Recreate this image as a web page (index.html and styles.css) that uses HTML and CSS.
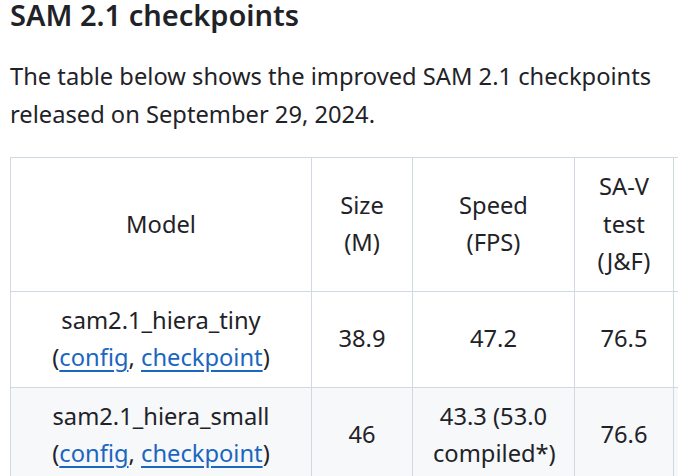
FILE: index.html
```html
<!DOCTYPE html>
<html>
<head>
<meta charset="utf-8">
<link rel="stylesheet" href="styles.css">
</head>
<body>
<article class="markdown">
  <h3 class="title">SAM 2.1 checkpoints</h3>
  <p class="intro">The table below shows the improved SAM 2.1 checkpoints released on September 29, 2024.</p>
  <div class="table-wrap">
    <table class="ckpt">
      <colgroup>
        <col class="c-model">
        <col class="c-size">
        <col class="c-speed">
        <col class="c-sav">
        <col class="c-mose">
        <col class="c-lvos">
      </colgroup>
      <thead>
        <tr>
          <th>Model</th>
          <th>Size (M)</th>
          <th>Speed (FPS)</th>
          <th>SA-V test (J&amp;F)</th>
          <th>MOSE val (J&amp;F)</th>
          <th>LVOS v2 (J&amp;F)</th>
        </tr>
      </thead>
      <tbody>
        <tr>
          <td>sam2.1_hiera_tiny<br>(<a href="#">config</a>, <a href="#">checkpoint</a>)</td>
          <td>38.9</td>
          <td>47.2</td>
          <td>76.5</td>
          <td>71.8</td>
          <td>77.3</td>
        </tr>
        <tr class="alt">
          <td>sam2.1_hiera_small<br>(<a href="#">config</a>, <a href="#">checkpoint</a>)</td>
          <td>46</td>
          <td>43.3 (53.0 compiled*)</td>
          <td>76.6</td>
          <td>73.5</td>
          <td>78.3</td>
        </tr>
      </tbody>
    </table>
  </div>
</article>
</body>
</html>
```

FILE: styles.css
```css
html, body {
  margin: 0;
  padding: 0;
  background: #ffffff;
}

body {
  width: 691px;
  height: 476px;
  overflow: hidden;
}

.markdown {
  padding: 0 0 0 10px;
  color: #1f2328;
  font-family: "Noto Sans", "Open Sans", sans-serif;
  font-size: 23.7px;
  line-height: 37.5px;
}

.title {
  margin: 0;
  font-size: 29px;
  font-weight: 600;
  line-height: 30px;
  color: #1f2328;
}

.intro {
  margin: 28px 0 0 0;
  width: 670px;
}

.table-wrap {
  margin-top: 24px;
  width: 668px;
  overflow: hidden;
}

.ckpt {
  border-collapse: collapse;
  border-spacing: 0;
  table-layout: fixed;
  width: 903px;
}

.c-model { width: 301px; }
.c-size { width: 101px; }
.c-speed { width: 162px; }
.c-sav { width: 99px; }
.c-mose { width: 120px; }
.c-lvos { width: 120px; }

.ckpt th,
.ckpt td {
  border: 1px solid #d1d9e0;
  padding: 10px 20px;
  text-align: center;
  vertical-align: middle;
  font-weight: 400;
}

.ckpt tr.alt {
  background: #f6f8fa;
}

.ckpt a {
  color: #1a66c0;
  text-decoration: underline;
  text-underline-offset: 4px;
  text-decoration-thickness: 1.5px;
}
```
